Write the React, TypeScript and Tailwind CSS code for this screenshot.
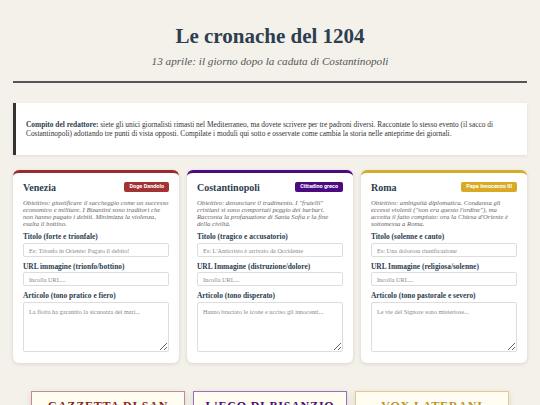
import React from 'react';

type Faction = {
  name: string;
  badge: string;
  accent: string;
  badgeBg: string;
  objective: string;
  titleLabel: string;
  titlePh: string;
  imageLabel: string;
  articleLabel: string;
  articlePh: string;
};

const factions: Faction[] = [
  {
    name: 'Venezia',
    badge: 'Doge Dandolo',
    accent: 'border-t-[#9b2c2c]',
    badgeBg: 'bg-[#a33232]',
    objective:
      'Obiettivo: giustificare il saccheggio come un successo economico e militare. I Bizantini sono traditori che non hanno pagato i debiti. Minimizza la violenza, esalta il bottino.',
    titleLabel: 'Titolo (forte e trionfale)',
    titlePh: 'Es: Trionfo in Oriente: Pagato il debito!',
    imageLabel: 'URL immagine (trionfo/bottino)',
    articleLabel: 'Articolo (tono pratico e fiero)',
    articlePh: 'La flotta ha garantito la sicurezza dei mari...',
  },
  {
    name: 'Costantinopoli',
    badge: 'Cittadino greco',
    accent: 'border-t-[#4b0a7e]',
    badgeBg: 'bg-[#4b0a82]',
    objective:
      'Obiettivo: denunciare il tradimento. I "fratelli" cristiani si sono comportati peggio dei barbari. Racconta la profanazione di Santa Sofia e la fine della civiltà.',
    titleLabel: 'Titolo (tragico e accusatorio)',
    titlePh: "Es: L'Anticristo è arrivato da Occidente",
    imageLabel: 'URL Immagine (distruzione/dolore)',
    articleLabel: 'Articolo (tono disperato)',
    articlePh: 'Hanno bruciato le icone e ucciso gli innocenti...',
  },
  {
    name: 'Roma',
    badge: 'Papa Innocenzo III',
    accent: 'border-t-[#d4ac2b]',
    badgeBg: 'bg-[#d9ab24]',
    objective:
      "Obiettivo: ambiguità diplomatica. Condanna gli eccessi violenti (\"non era questo l'ordine\"), ma accetta il fatto compiuto: ora la Chiesa d'Oriente è sottomessa a Roma.",
    titleLabel: 'Titolo (solenne e cauto)',
    titlePh: 'Es: Una dolorosa riunificazione',
    imageLabel: 'URL Immagine (religiosa/solenne)',
    articleLabel: 'Articolo (tono pastorale e severo)',
    articlePh: 'Le vie del Signore sono misteriose...',
  },
];

const papers = [
  { title: 'Gazzetta di San Marco', box: 'border-[#c98a8a]', text: 'text-[#8b1f1f]' },
  { title: "L'Eco di Bisanzio", box: 'border-[#9a6fb8]', text: 'text-[#4b0a7e]' },
  { title: 'Vox Laterani', box: 'border-[#e0cc86]', text: 'text-[#b8942a]' },
];

const fieldCls =
  'block w-full border border-[#ddd] rounded-[2px] px-[5px] text-[6.3px] text-[#333] placeholder:text-[#888] focus:outline-none';

function FactionCard({ f }: { f: Faction }) {
  return (
    <div className={`bg-white rounded-md border-t-[3px] ${f.accent} shadow-[0_1px_4px_rgba(0,0,0,0.12)] px-[10px] pt-[7px] pb-[11px]`}>
      {/* Card header */}
      <div className="flex items-center justify-between h-[14px]">
        <h2 className="text-[10px] font-bold text-[#2c3e50]">{f.name}</h2>
        <span className={`${f.badgeBg} text-white font-['Roboto',sans-serif] text-[5.5px] font-bold leading-none px-[5px] py-[2px] rounded-[2px]`}>
          {f.badge}
        </span>
      </div>

      <p className="mt-[5px] h-[28px] text-[6.7px] leading-[7px] italic text-[#666]">{f.objective}</p>

      {/* Title */}
      <label className="block mt-[6px] text-[7.4px] leading-[8px] font-bold text-[#2c3e50]">{f.titleLabel}</label>
      <input type="text" placeholder={f.titlePh} className={`mt-[2px] h-[14px] ${fieldCls}`} />

      {/* Image */}
      <label className="block mt-[6px] text-[7.4px] leading-[8px] font-bold text-[#2c3e50]">{f.imageLabel}</label>
      <input type="text" placeholder="Incolla URL..." className={`mt-[1px] h-[14px] ${fieldCls}`} />

      {/* Article */}
      <label className="block mt-[6px] text-[7.4px] leading-[8px] font-bold text-[#2c3e50]">{f.articleLabel}</label>
      <textarea placeholder={f.articlePh} className={`mt-[2px] h-[50px] py-[4px] resize-y ${fieldCls}`} />
    </div>
  );
}

export default function App() {
  return (
    <div className="min-h-screen bg-[#f4f1ea] px-[13px] pb-8 font-['Liberation_Serif',Georgia,serif] text-[#333]">
      {/* Header */}
      <header className="pt-[23px] text-center">
        <h1 className="text-[21px] leading-[26px] font-bold text-[#2c3e50]">Le cronache del 1204</h1>
        <p className="mt-[4px] text-[11.2px] leading-[16px] italic text-[#555]">
          13 aprile: il giorno dopo la caduta di Costantinopoli
        </p>
      </header>
      <div className="mt-[12px] h-[2px] bg-[#555]" />

      {/* Brief */}
      <div className="mt-[20px] bg-white border-l-[3px] border-[#333] shadow-[0_1px_3px_rgba(0,0,0,0.08)] pl-[10px] pr-[10px] py-[17px]">
        <p className="text-[7.4px] leading-[9px] text-[#333]">
          <strong className="text-[#2c3e50]">Compito del redattore:</strong> siete gli unici giornalisti rimasti nel
          Mediterraneo, ma dovete scrivere per tre padroni diversi. Raccontate lo stesso evento (il sacco di
          Costantinopoli) adottando tre punti di vista opposti. Compilate i moduli qui sotto e osservate come cambia la
          storia nelle anteprime dei giornali.
        </p>
      </div>

      {/* Faction forms */}
      <div className="mt-[15px] grid grid-cols-3 gap-[8px]">
        {factions.map((f) => (
          <FactionCard key={f.name} f={f} />
        ))}
      </div>

      {/* Newspaper previews */}
      <div className="mt-[28px] mx-[18px] grid grid-cols-3 gap-[8px]">
        {papers.map((p) => (
          <div key={p.title} className={`bg-[#fffcf2] border-[1.5px] ${p.box} shadow-[0_2px_6px_rgba(0,0,0,0.12)] px-[8px] pt-[7px] pb-[10px] text-center`}>
            <h3 className={`text-[12px] leading-[15px] font-bold uppercase tracking-[0.8px] ${p.text}`}>{p.title}</h3>
          </div>
        ))}
      </div>
    </div>
  );
}
